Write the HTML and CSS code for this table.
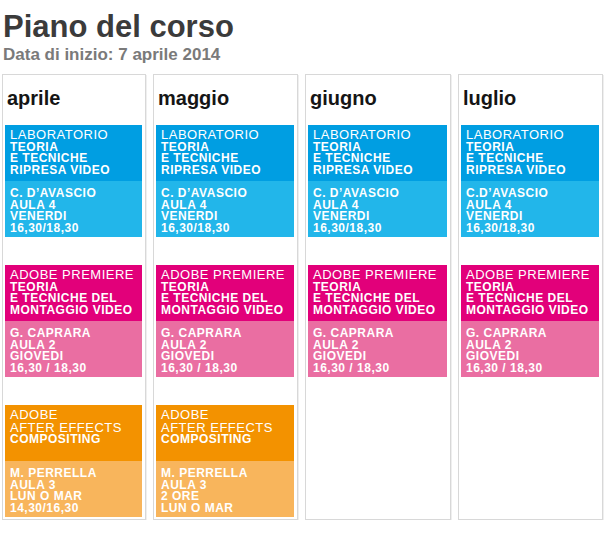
FILE: index.html
```html
<!DOCTYPE html>
<html lang="it">
<head>
<meta charset="utf-8">
<title>Piano del corso</title>
<link rel="stylesheet" href="styles.css">
</head>
<body>
<header class="page-head">
  <h1 class="title">Piano del corso</h1>
  <p class="subtitle">Data di inizio: 7 aprile 2014</p>
</header>
<main class="months">
  <section class="month">
    <h2 class="month-name">aprile</h2>
    <div class="course blue">
      <div class="course-head"><span class="light">LABORATORIO</span><br>TEORIA<br>E TECNICHE<br>RIPRESA VIDEO</div>
      <div class="course-body">C. D’AVASCIO<br>AULA 4<br>VENERDI<br>16,30/18,30</div>
    </div>
    <div class="course pink">
      <div class="course-head"><span class="light">ADOBE PREMIERE</span><br>TEORIA<br>E TECNICHE DEL<br>MONTAGGIO VIDEO</div>
      <div class="course-body">G. CAPRARA<br>AULA 2<br>GIOVEDI<br>16,30 / 18,30</div>
    </div>
    <div class="course orange">
      <div class="course-head"><span class="light">ADOBE<br>AFTER EFFECTS</span><br>COMPOSITING</div>
      <div class="course-body">M. PERRELLA<br>AULA 3<br>LUN O MAR<br>14,30/16,30</div>
    </div>
  </section>
  <section class="month">
    <h2 class="month-name">maggio</h2>
    <div class="course blue">
      <div class="course-head"><span class="light">LABORATORIO</span><br>TEORIA<br>E TECNICHE<br>RIPRESA VIDEO</div>
      <div class="course-body">C. D’AVASCIO<br>AULA 4<br>VENERDI<br>16,30/18,30</div>
    </div>
    <div class="course pink">
      <div class="course-head"><span class="light">ADOBE PREMIERE</span><br>TEORIA<br>E TECNICHE DEL<br>MONTAGGIO VIDEO</div>
      <div class="course-body">G. CAPRARA<br>AULA 2<br>GIOVEDI<br>16,30 / 18,30</div>
    </div>
    <div class="course orange">
      <div class="course-head"><span class="light">ADOBE<br>AFTER EFFECTS</span><br>COMPOSITING</div>
      <div class="course-body">M. PERRELLA<br>AULA 3<br>2 ORE<br>LUN O MAR</div>
    </div>
  </section>
  <section class="month">
    <h2 class="month-name">giugno</h2>
    <div class="course blue">
      <div class="course-head"><span class="light">LABORATORIO</span><br>TEORIA<br>E TECNICHE<br>RIPRESA VIDEO</div>
      <div class="course-body">C. D’AVASCIO<br>AULA 4<br>VENERDI<br>16,30/18,30</div>
    </div>
    <div class="course pink">
      <div class="course-head"><span class="light">ADOBE PREMIERE</span><br>TEORIA<br>E TECNICHE DEL<br>MONTAGGIO VIDEO</div>
      <div class="course-body">G. CAPRARA<br>AULA 2<br>GIOVEDI<br>16,30 / 18,30</div>
    </div>
  </section>
  <section class="month">
    <h2 class="month-name">luglio</h2>
    <div class="course blue">
      <div class="course-head"><span class="light">LABORATORIO</span><br>TEORIA<br>E TECNICHE<br>RIPRESA VIDEO</div>
      <div class="course-body">C.D’AVASCIO<br>AULA 4<br>VENERDI<br>16,30/18,30</div>
    </div>
    <div class="course pink">
      <div class="course-head"><span class="light">ADOBE PREMIERE</span><br>TEORIA<br>E TECNICHE DEL<br>MONTAGGIO VIDEO</div>
      <div class="course-body">G. CAPRARA<br>AULA 2<br>GIOVEDI<br>16,30 / 18,30</div>
    </div>
  </section>
</main>
</body>
</html>
```
FILE: styles.css
```css
html, body {
  margin: 0;
  background: #ffffff;
}
body {
  padding: 11px 2px 0;
  font-family: "Liberation Sans", Arial, Helvetica, sans-serif;
}
.page-head {
  padding-left: 1px;
}
.title {
  margin: 0;
  font-size: 31px;
  line-height: 32px;
  font-weight: bold;
  color: #3b3b3b;
  letter-spacing: 0;
}
.subtitle {
  margin: 2px 0 0;
  font-size: 17px;
  line-height: 19px;
  font-weight: bold;
  color: #7a7a7a;
}
.months {
  display: grid;
  grid-template-columns: 144px 145px 146px 145px;
  column-gap: 7px;
  margin-top: 10px;
}
.month {
  border: 1px solid #d8d8d8;
  box-shadow: 1px 1px 0 #efefef;
  padding: 11px 3px 2px 2px;
}
.month-name {
  margin: 0 0 15px 2px;
  font-size: 20px;
  line-height: 24px;
  font-weight: bold;
  color: #151515;
}
.course {
  margin-bottom: 28px;
  color: #ffffff;
  font-weight: bold;
  font-size: 12px;
  line-height: 11.7px;
  letter-spacing: 0.5px;
}
.course:last-child {
  margin-bottom: 0;
}
.course-head {
  height: 56px;
  box-sizing: border-box;
  padding: 4px 4px 0 5px;
}
.course-body {
  height: 56px;
  box-sizing: border-box;
  padding: 7px 4px 0 5px;
}
.light {
  font-weight: normal;
  font-size: 13px;
  letter-spacing: 0.5px;
}
.blue .course-head { background: #009ee2; }
.blue .course-body { background: #22b6ea; }
.pink .course-head { background: #e2007a; }
.pink .course-body { background: #ea6ea2; }
.orange .course-head { background: #f39200; }
.orange .course-body { background: #f8b55c; }
```
